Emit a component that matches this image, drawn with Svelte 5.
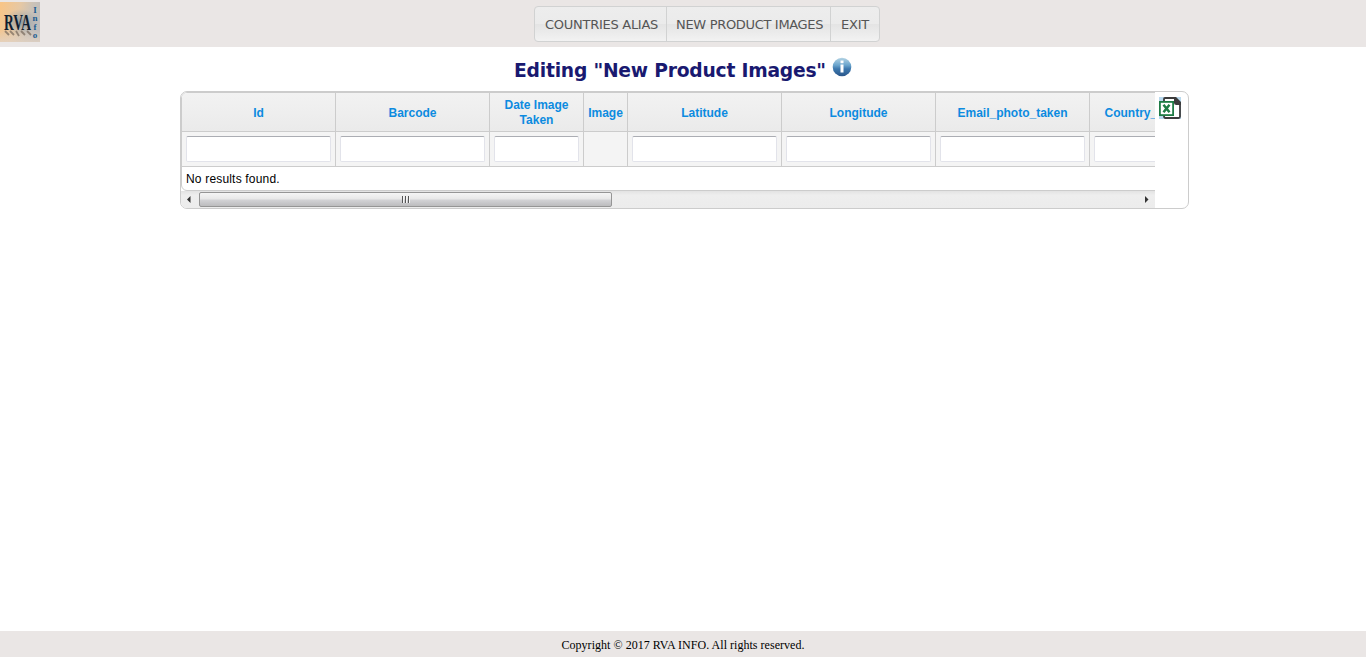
<script>
  const menu = [
    { label: 'COUNTRIES ALIAS', w: 113 },
    { label: 'NEW PRODUCT IMAGES', w: 147 },
    { label: 'EXIT', w: 29 }
  ];
  const columns = [
    { label: 'Id', w: 154, filter: true },
    { label: 'Barcode', w: 154, filter: true },
    { label: 'Date Image Taken', w: 94, filter: true },
    { label: 'Image', w: 44, filter: false },
    { label: 'Latitude', w: 154, filter: true },
    { label: 'Longitude', w: 154, filter: true },
    { label: 'Email_photo_taken', w: 154, filter: true },
    { label: 'Country_photo_taken', w: 154, filter: true }
  ];
</script>

<div class="page">
  <header>
    <svg class="logo" width="40" height="40" viewBox="0 0 40 40">
      <defs>
        <linearGradient id="lg" x1="0" y1="0.2" x2="1" y2="0.45">
          <stop offset="0" stop-color="#f8c588" />
          <stop offset="0.45" stop-color="#e6c8a4" />
          <stop offset="0.75" stop-color="#cac2b8" />
          <stop offset="1" stop-color="#bebcbc" />
        </linearGradient>
        <linearGradient id="base" x1="0" y1="0" x2="0" y2="1">
          <stop offset="0.7" stop-color="#e3d3c3" stop-opacity="0" />
          <stop offset="1" stop-color="#e3d3c3" stop-opacity=".8" />
        </linearGradient>
        <radialGradient id="glow">
          <stop offset="0" stop-color="#75899a" stop-opacity=".7" />
          <stop offset="1" stop-color="#8d9aa5" stop-opacity="0" />
        </radialGradient>
      </defs>
      <rect width="40" height="40" fill="url(#lg)" />
      <rect width="40" height="40" fill="url(#base)" />
      <ellipse cx="21" cy="20" rx="18" ry="13" fill="url(#glow)" />
      <path d="M5 29l4 4M10 29l4 4M16 29l3 5M21 29l4 4M27 29l4 4" stroke="#77695c" stroke-width="1.8" opacity=".7" />
      <text x="4" y="28" textLength="27" lengthAdjust="spacingAndGlyphs" class="rva">RVA</text>
      <g class="info"><text x="35" y="11">I</text><text x="35" y="19">n</text><text x="35" y="27.500">f</text><text x="35" y="36">o</text></g>
    </svg>
    <nav>
      {#each menu as m}
        <a href="#top"><span style="width:{m.w}px">{m.label}</span></a>
      {/each}
    </nav>
  </header>

  <main>
    <h1>
      <span>Editing "New Product Images"</span>
      <svg width="20" height="20" viewBox="0 0 20 20">
        <defs>
          <linearGradient id="ball" x1="0" y1="0" x2="0" y2="1">
            <stop offset="0" stop-color="#b5d4e4" />
            <stop offset="0.4" stop-color="#6ba5cd" />
            <stop offset="0.6" stop-color="#3d78ae" />
            <stop offset="1" stop-color="#2a568a" />
          </linearGradient>
        </defs>
        <circle cx="10" cy="10" r="9.3" fill="url(#ball)" />
        <path d="M8.500 3.600h3v2.700h-3zM8.500 7.500h3v8h-3z" fill="#fff" />
      </svg>
    </h1>

    <section class="panel">
      <div class="scroller">
        <div class="grid">
          <div class="row head">
            {#each columns as c}
              <div class="cell" style="width:{c.w}px"><span>{c.label}</span></div>
            {/each}
          </div>
          <div class="row filters">
            {#each columns as c}
              <div class="cell" style="width:{c.w}px">{#if c.filter}<input type="text" aria-label={c.label} />{/if}</div>
            {/each}
          </div>
          <div class="empty">No results found.</div>
        </div>
        <div class="bar">
          <svg class="arrow" width="17" height="17" viewBox="0 0 17 17"><path d="M6 8.5L9.5 5v7z" fill="#333" /></svg>
          <div class="thumb"><i></i><i></i><i></i></div>
          <svg class="arrow end" width="17" height="17" viewBox="0 0 17 17"><path d="M10.5 8.5L7 5v7z" fill="#333" /></svg>
        </div>
      </div>
      <svg class="excel" width="22" height="22" viewBox="0 0 22 22">
        <path d="M0 0h22v22H0z" fill="#b9d9ee" />
        <path d="M6 1h10l5 5v13.500q0 1.500-1.500 1.500H6.500Q5 21 5 19V2q0-1 1-1z" fill="#fff" stroke="#3c3c3c" stroke-width="1.800" />
        <path d="M15 0h2l5 5v3h-4.500q-2.500 0-2.500-2.500z" fill="#3c3c3c" />
        <rect x=".9" y="4.900" width="13.200" height="13.200" fill="#fff" stroke="#1f7c45" stroke-width="1.800" />
        <path d="M4.500 7.800l6 7.500M10.500 7.800l-6 7.500" stroke="#1f7c45" stroke-width="2.500" />
      </svg>
    </section>
  </main>

  <footer>Copyright © 2017 RVA INFO. All rights reserved.</footer>
</div>

<style>
  .page { height: 657px; display: flex; flex-direction: column; background: #fff; overflow: hidden; }
  header { height: 47px; box-sizing: border-box; background: #eae6e5; display: flex; align-items: flex-start; padding-top: 2px; }
  .logo { display: block; flex: none; }
  .rva { font: bold 23px "Liberation Serif", serif; fill: #101e30; }
  .info { font: bold 9px "Liberation Serif", serif; fill: #205c91; text-anchor: middle; }
  nav { display: flex; margin: 4px 0 0 494px; height: 36px; box-sizing: border-box; border: 1px solid #d1d2d2; border-radius: 4px; background: linear-gradient(#ededed 0, #ebebeb 49%, #e4e4e4 51%, #f2f2f2 100%); }
  nav a { display: flex; padding: 0 7px 0 9px; border-right: 1px solid #d1d2d2; color: #555; text-decoration: none; font: 13px/36px "DejaVu Sans", Verdana, sans-serif; letter-spacing: -0.32px; white-space: nowrap; height: 34px; }
  nav a:first-child { padding: 0 8px 0 10px; letter-spacing: -0.27px; }
  nav a:last-child { border: 0; padding: 0 9px 0 10px; letter-spacing: -0.2px; }
  nav span { display: block; }
  main { flex: 1; }
  h1 { margin: 0; height: 44px; display: flex; padding-left: 514px; color: #191970; font: bold 18.72px/48px "DejaVu Sans", Verdana, sans-serif; }
  h1 span { width: 318px; white-space: nowrap; letter-spacing: -0.22px; }
  h1 svg { margin-top: 10px; }
  .panel { width: 1009px; height: 118px; box-sizing: border-box; margin-left: 180px; border: 1px solid #ccc; border-radius: 7px; display: flex; overflow: hidden; background: #fff; }
  .scroller { width: 974px; overflow: hidden; flex: none; }
  .grid { width: 1400px; height: 99px; box-sizing: border-box; border: 1px solid #ccc; border-radius: 6px; overflow: hidden; font-family: "Liberation Sans", Arial, sans-serif; font-size: 12px; }
  .row { display: flex; }
  .cell { box-sizing: border-box; flex: none; border-right: 1px solid #ccc; border-bottom: 1px solid #ccc; }
  .head { background: linear-gradient(#f2f2f2, #eaeaea); color: #0c8be0; font-weight: bold; line-height: 15px; }
  .head .cell { height: 39px; display: flex; align-items: center; justify-content: center; text-align: center; padding: 2px 3.5px 0 3.5px; }
  .filters { background: #f4f4f4; }
  .filters .cell { height: 35px; padding: 4px; }
  input { display: block; width: 100%; height: 26px; box-sizing: border-box; border: 1px solid #e2e3ea; border-top-color: #abadb3; border-radius: 2px; background: #fff; padding: 0; outline: 0; }
  .empty { height: 23px; line-height: 24px; padding-left: 4px; color: #000; letter-spacing: 0.18px; }
  .bar { height: 17px; display: flex; background: linear-gradient(#e3e3e3, #eee 25%, #ececec); }
  .arrow { flex: none; margin-right: 1px; }
  .end { margin: 0 0 0 auto; }
  .thumb { width: 413px; height: 15px; margin-top: 1px; box-sizing: border-box; border: 1px solid #959595; border-radius: 2px; display: flex; align-items: center; justify-content: center; gap: 1px; background: linear-gradient(#f5f5f5 0, #e7e7e7 48%, #d3d3d6 52%, #bcbcbe 100%); }
  .thumb i { width: 2px; height: 7px; background: linear-gradient(90deg, #555 50%, #f5f5f5 50%); }
  .excel { flex: none; margin: 5px 0 0 4px; }
  footer { height: 26px; flex: none; background: #eae6e5; text-align: center; font: 12px/28px "Liberation Serif", "Times New Roman", serif; letter-spacing: 0.03px; color: #000; }
</style>
